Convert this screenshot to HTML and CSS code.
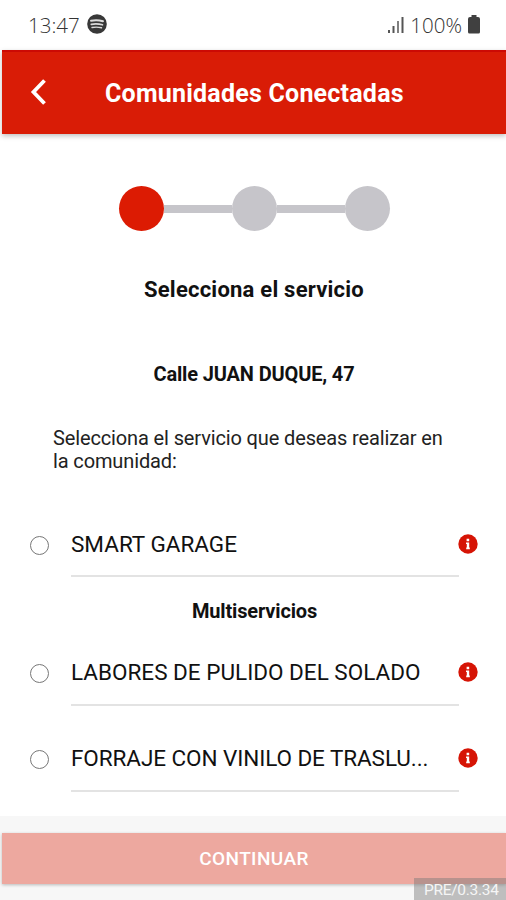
FILE: index.html
```html
<!DOCTYPE html>
<html lang="es">
<head>
<meta charset="utf-8">
<meta name="viewport" content="width=device-width, initial-scale=1">
<title>Comunidades Conectadas</title>
<link rel="stylesheet" href="styles.css">
</head>
<body>
<div class="screen">
  <div class="status">
    <span class="time">13:47</span>
    <svg class="music" viewBox="0 0 20 20"><circle cx="10" cy="10" r="9.8" fill="#383838"/><g fill="none" stroke="#ddd" stroke-linecap="round"><path d="M4 6.800Q10 5.400 16 7.300" stroke-width="2"/><path d="M4.300 10.300Q10 9.300 15.500 10.800" stroke-width="1.700"/><path d="M5 13.500Q10 12.600 14.500 13.800" stroke-width="1.400"/></g></svg>
    <svg class="signal" viewBox="0 0 17 18"><g fill="#555"><path d="M0 14h2v3H0z"/><path d="M4.500 10h2v7h-2z"/><path d="M9 5h2v12H9z" opacity=".75"/><path d="M13.500 1h2v16h-2z"/></g></svg>
    <span class="percent">100%</span>
    <svg class="battery" viewBox="0 0 12 19"><path d="M3.500 0h5v2H10q2 0 2 2v13q0 1.500-1.500 1.500h-9Q0 18.500 0 17V4q0-2 2-2h1.500z" fill="#404040"/></svg>
  </div>
  <header class="bar">
    <svg class="back" viewBox="0 0 18 28"><path d="M15.500 2.500 4.500 14l11 11.500" fill="none" stroke="#fff" stroke-width="3.800"/></svg>
    <h1>Comunidades Conectadas</h1>
  </header>
  <main>
    <div class="steps">
      <i class="dot active"></i><i class="line"></i><i class="dot"></i><i class="line"></i><i class="dot"></i>
    </div>
    <h2>Selecciona el servicio</h2>
    <h3 class="address">Calle JUAN DUQUE, 47</h3>
    <p class="intro">Selecciona el servicio que deseas realizar en<br>la comunidad:</p>
    <div class="row">
      <i class="radio"></i>
      <div class="label"><span>SMART GARAGE</span></div>
      <svg class="info" viewBox="0 0 20 20"><circle cx="10" cy="10" r="9.700" fill="#d61405"/><path d="M8.600 4.800h2.600v2.400H8.600zM8 8.600h3.200v5h.6v1.600H8.200v-1.600h.6V10H8z" fill="#fff"/></svg>
    </div>
    <h3 class="group">Multiservicios</h3>
    <div class="row">
      <i class="radio"></i>
      <div class="label"><span>LABORES DE PULIDO DEL SOLADO</span></div>
      <svg class="info" viewBox="0 0 20 20"><circle cx="10" cy="10" r="9.700" fill="#d61405"/><path d="M8.600 4.800h2.600v2.400H8.600zM8 8.600h3.200v5h.6v1.600H8.200v-1.600h.6V10H8z" fill="#fff"/></svg>
    </div>
    <div class="row">
      <i class="radio"></i>
      <div class="label"><span class="clipped">FORRAJE CON VINILO DE TRASLU...</span></div>
      <svg class="info" viewBox="0 0 20 20"><circle cx="10" cy="10" r="9.700" fill="#d61405"/><path d="M8.600 4.800h2.600v2.400H8.600zM8 8.600h3.200v5h.6v1.600H8.200v-1.600h.6V10H8z" fill="#fff"/></svg>
    </div>
  </main>
  <footer>
    <button class="continue" type="button">CONTINUAR</button>
    <div class="version">PRE/0.3.34</div>
  </footer>
</div>
</body>
</html>
```

FILE: styles.css
```css
* { box-sizing: border-box; }
body { margin: 0; background: #fff; font-family: Roboto, "Liberation Sans", sans-serif; color: #111; }
.screen { width: 506px; height: 900px; display: flex; flex-direction: column; overflow: hidden; }
h1, h2, h3, p { margin: 0; white-space: nowrap; }
i { display: block; flex: none; }
svg { display: block; flex: none; }

.status { height: 50px; flex: none; display: flex; align-items: center; padding: 0 26px 0 28px; font-family: "Open Sans", sans-serif; font-weight: 300; font-size: 20.5px; color: #333; }
.music { width: 20px; height: 20px; margin: -2px 0 0 7px; }
.signal { width: 17px; height: 18px; margin: 0 5px 0 auto; }
.battery { width: 12px; height: 19px; margin-left: 6px; margin-top: -2px; }

.bar { height: 84px; flex: none; margin-left: 2px; background: #d91c06; border-top: 2px solid #cc0a04; box-shadow: 0 2px 5px rgba(0, 0, 0, .25); display: flex; align-items: center; padding-left: 27px; }
.back { width: 18px; height: 28px; margin-top: -2px; }
h1 { margin-left: 58px; font-size: 25px; line-height: 30px; font-weight: 700; letter-spacing: .22px; color: #fff; margin-top: 1px; }

main { flex: 1; min-height: 0; display: flex; flex-direction: column; align-items: center; }
.steps { display: flex; align-items: center; margin: 52px 0 0 3px; }
.dot { width: 45px; height: 45px; border-radius: 50%; background: #c6c5ca; }
.dot.active { background: #dc1b03; }
.line { width: 68px; height: 8px; background: #c6c5ca; }
h2 { margin: 44px 0 0 2px; font-size: 22px; line-height: 30px; font-weight: 700; letter-spacing: .22px; }
h3 { font-size: 20px; line-height: 24px; font-weight: 700; letter-spacing: -.15px; }
.address { margin: 57px 0 0 2px; }
.intro { align-self: flex-start; margin: 41px 0 0 53px; font-size: 20px; line-height: 23px; letter-spacing: -.13px; color: #222; }

.row { width: 506px; height: 63px; flex: none; display: flex; }
.intro + .row { margin-top: 41px; }
.row + .row { margin-top: 23px; }
.radio { width: 19px; height: 19px; border: 1.5px solid #777; border-radius: 50%; margin: 22px 0 0 30px; }
.label { width: 388px; margin-left: 22px; padding-top: 15px; border-bottom: 2px solid #e3e3e3; font-size: 22.5px; line-height: 30px; white-space: nowrap; }
.clipped { letter-spacing: -.08px; }
.info { width: 20px; height: 20px; margin-top: 20px; margin-left: -1px; }
.group { margin: 22px 0 20px 3px; }
.group + .row .radio, .row + .row .radio { margin-top: 21px; }
.group + .row .info, .row + .row .info { margin-top: 19px; }
.group + .row .label, .row + .row .label { padding-top: 14px; }

footer { position: relative; height: 84px; flex: none; background: #f7f7f7; padding: 17px 0 0 2px; }
.continue { width: 100%; height: 51px; display: block; border: 0; padding: 0; background: #eda89f; color: #fff; font: 500 19px/51px Roboto, sans-serif; letter-spacing: .4px; box-shadow: 0 1px 3px rgba(0, 0, 0, .25); }
.version { position: absolute; right: 0; bottom: 0; width: 92px; height: 22px; background: rgba(120, 120, 120, .45); color: #f5f5f5; font-size: 15.5px; line-height: 24px; letter-spacing: -.3px; padding-left: 10px; white-space: nowrap; }
```
